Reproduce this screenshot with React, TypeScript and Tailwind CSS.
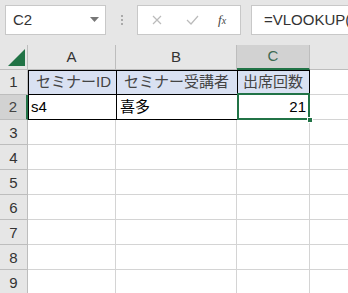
import React from 'react';

const font = { fontFamily: '"Liberation Sans", "Noto Sans CJK JP", sans-serif' };

const rows = [3, 4, 5, 6, 7, 8, 9];

const App: React.FC = () => {
  return (
    <div className="w-[348px] h-[293px] bg-[#e6e6e6] overflow-hidden text-[15px] text-[#222]" style={font}>
      {/* formula bar */}
      <div className="h-[45px] flex items-start pt-[5px] pl-[5px]">
        <div className="w-[101px] h-[30px] bg-white border border-[#c8c8c8] flex items-center justify-between pl-[7px] pr-[6px]">
          <span className="text-[#333]">C2</span>
          <svg width="9" height="6" viewBox="0 0 9 6">
            <path d="M0 0 L9 0 L4.5 5 Z" fill="#777" />
          </svg>
        </div>
        <div className="w-[31px] h-[30px] flex flex-col items-center justify-center gap-[2px]">
          <span className="w-[2px] h-[2px] bg-[#aaa]" />
          <span className="w-[2px] h-[2px] bg-[#aaa]" />
          <span className="w-[2px] h-[2px] bg-[#aaa]" />
        </div>
        <div className="w-[104px] h-[30px] bg-white border border-[#c8c8c8] flex items-center">
          <svg className="ml-[14px]" width="10" height="10" viewBox="0 0 10 10">
            <path d="M1 1 L9 9 M9 1 L1 9" stroke="#bbb" strokeWidth="1.2" />
          </svg>
          <svg className="ml-[24px]" width="13" height="10" viewBox="0 0 13 10">
            <path d="M1 5 L5 9 L12 1" stroke="#bbb" strokeWidth="1.2" fill="none" />
          </svg>
          <span className="ml-[19px] text-[13px] italic text-[#444]" style={{ fontFamily: '"Liberation Serif", serif' }}>
            f<span className="text-[10px]">x</span>
          </span>
        </div>
        <div className="ml-[10px] flex-1 h-[30px] bg-white border border-[#c8c8c8] border-r-0 flex items-center pl-[12px] overflow-hidden">
          <span className="text-[#333] whitespace-nowrap">=VLOOKUP(</span>
        </div>
      </div>

      {/* sheet grid */}
      <div className="grid grid-cols-[28px_88px_121px_73px_38px] auto-rows-[25px] bg-white">
        {/* header row */}
        <div className="bg-[#e6e6e6] border-r border-b border-[#bdbdbd] relative">
          <svg className="absolute left-[8px] top-[4px]" width="17" height="17" viewBox="0 0 17 17">
            <path d="M0 17 L17 0 L17 17 Z" fill="#217346" />
          </svg>
        </div>
        <div className="bg-[#e6e6e6] border-r border-b border-[#bdbdbd] flex items-center justify-center text-[#333]">A</div>
        <div className="bg-[#e6e6e6] border-r border-b border-[#bdbdbd] flex items-center justify-center text-[#333]">B</div>
        <div className="bg-[#d2d2d2] border-r border-[#bdbdbd] border-b-2 border-b-[#217346] flex items-center justify-center text-[#3d6a52]">C</div>
        <div className="bg-[#e6e6e6] border-b border-[#bdbdbd]" />

        {/* row 1 */}
        <div className="bg-[#e6e6e6] border-r border-b border-[#bdbdbd] flex items-center justify-center text-[#333]">1</div>
        <div className="bg-[#d9e1f2] border border-black border-r-0 flex items-center pl-[7px] text-[#444] whitespace-nowrap">セミナーID</div>
        <div className="bg-[#d9e1f2] border border-black border-r-0 flex items-center pl-[7px] text-[#444] whitespace-nowrap">セミナー受講者</div>
        <div className="bg-[#d9e1f2] border border-black flex items-center pl-[5px] text-[#444] whitespace-nowrap">出席回数</div>
        <div className="border-b border-[#d4d4d4]" />

        {/* row 2 */}
        <div className="bg-[#d2d2d2] border-b border-[#bdbdbd] border-r-2 border-r-[#217346] flex items-center justify-center text-[#444]">2</div>
        <div className="border-l border-b border-black flex items-center pl-[2px] text-black">s4</div>
        <div className="border-l border-b border-black flex items-center pl-[3px] text-black">喜多</div>
        <div className="border-x border-b border-black relative flex items-center justify-end pr-[3px] text-black">
          21
          <div className="absolute -left-[1px] -top-[2px] -right-[1px] -bottom-[1px] border-2 border-[#217346]" />
          <div className="absolute -right-[4px] -bottom-[4px] w-[6px] h-[6px] bg-[#217346] border border-white" />
        </div>
        <div className="border-b border-[#d4d4d4]" />

        {rows.map(r => (
          <React.Fragment key={r}>
            <div className="bg-[#e6e6e6] border-r border-b border-[#bdbdbd] flex items-center justify-center text-[#333] leading-none">{r}</div>
            <div className="border-r border-b border-[#d4d4d4]" />
            <div className="border-r border-b border-[#d4d4d4]" />
            <div className="border-r border-b border-[#d4d4d4]" />
            <div className="border-b border-[#d4d4d4]" />
          </React.Fragment>
        ))}
      </div>
    </div>
  );
};

export default App;
